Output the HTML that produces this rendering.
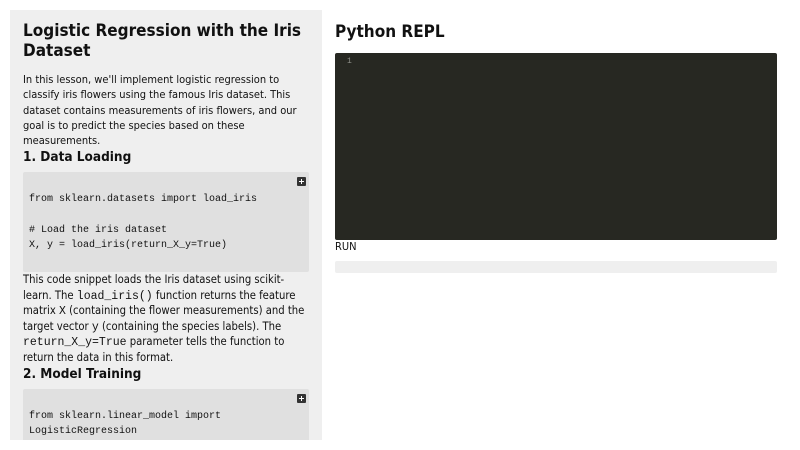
<!DOCTYPE html>
<html><head><meta charset="utf-8"><style>
*{margin:0;padding:0;box-sizing:border-box}
body{width:800px;height:450px;overflow:hidden;background:#fff;font-family:"DejaVu Sans Condensed","DejaVu Sans","Liberation Sans",sans-serif;font-stretch:condensed;color:#111;position:relative}
.left{position:absolute;left:10px;top:10px;width:312px;height:430px;background:#efefef;overflow:hidden;padding:0 13px}
h1{font-size:17px;line-height:20px;font-weight:bold;margin-top:11px;color:#111}
p{font-size:11px;line-height:15.3px;margin-top:10px}
h2{font-size:13.5px;line-height:18px;font-weight:bold;margin-top:0px}
.code{position:relative;background:#e0e0e0;border-radius:2px;margin-top:6px;height:100px;padding:20px 6px 0 6px;font-family:"Liberation Mono",monospace;font-size:10px;line-height:15.2px;white-space:pre}
.plus{position:absolute;right:3px;top:5px;width:9px;height:9px;background:#333;border-radius:1px}
.plus:before{content:"";position:absolute;left:4px;top:2px;width:1px;height:5px;background:#fff}
.plus:after{content:"";position:absolute;left:2px;top:4px;width:5px;height:1px;background:#fff}
code{font-family:"Liberation Mono",monospace;font-size:11.5px;line-height:1}
</style></head><body>
<div class="left">
<h1>Logistic Regression with the Iris Dataset</h1>
<p style="margin-top:11px">In this lesson, we'll implement logistic regression to classify iris flowers using the famous Iris dataset. This dataset contains measurements of iris flowers, and our goal is to predict the species based on these measurements.</p>
<h2>1. Data Loading</h2>
<div class="code"><span class="plus"></span>from sklearn.datasets import load_iris

# Load the iris dataset
X, y = load_iris(return_X_y=True)</div>
<p style="margin-top:0px;font-size:11.2px;line-height:15.4px">This code snippet loads the Iris dataset using scikit-learn. The <code>load_iris()</code> function returns the feature matrix <code>X</code> (containing the flower measurements) and the target vector <code>y</code> (containing the species labels). The <code>return_X_y=True</code> parameter tells the function to return the data in this format.</p>
<h2>2. Model Training</h2>
<div class="code"><span class="plus"></span>from sklearn.linear_model import
LogisticRegression</div>
</div>
<div style="position:absolute;left:335px;top:21px;font-size:17px;font-weight:bold;line-height:22px">Python REPL</div>
<div style="position:absolute;left:335px;top:53px;width:442px;height:187px;background:#272822;border-radius:2px">
<span style="position:absolute;left:12px;top:4px;font-family:'Liberation Mono',monospace;font-size:8px;color:#8f908a">1</span></div>
<div style="position:absolute;left:335px;top:240px;font-size:11px;line-height:14px">RUN</div>
<div style="position:absolute;left:335px;top:261px;width:442px;height:12px;background:#efefef;border-radius:2px"></div>
</body></html>
